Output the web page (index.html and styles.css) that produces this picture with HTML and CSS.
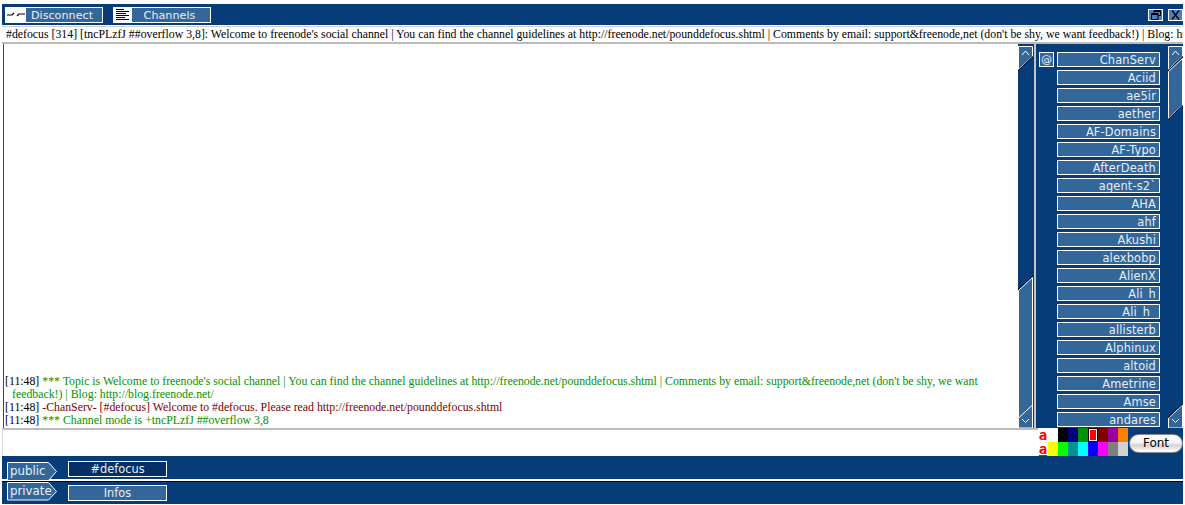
FILE: index.html
```html
<!DOCTYPE html>
<html lang="en">
<head>
<meta charset="utf-8">
<title>freenode chat</title>
<link rel="stylesheet" href="styles.css">
</head>
<body>
<div class="app">
  <header class="topbar">
    <div class="tool">
      <span class="tool-icon">
        <svg width="20" height="15" viewBox="0 0 20 15"><path d="M1 8h5l2-2M11 9l2-2h6" fill="none" stroke="#000" stroke-width="1.2"/></svg>
      </span>
      <span class="tool-btn tool-disconnect">Disconnect</span>
    </div>
    <div class="tool tool-channels">
      <span class="tool-icon tool-icon-narrow">
        <svg width="18" height="15" viewBox="0 0 18 15"><path d="M2 2.500h8M2 4.500h13M2 6.500h10M2 8.500h13M2 10.500h9M2 12.500h13" fill="none" stroke="#000" stroke-width="1"/></svg>
      </span>
      <span class="tool-btn tool-chan">Channels</span>
    </div>
    <div class="win-btns">
      <span class="win-btn">
        <svg width="13" height="10" viewBox="0 0 13 10"><path d="M5 3V.5h6.500v5H9M2.500 3.500h6.500v6h-6.500zM2.500 4.500h6.500M5 1.500h6.500" fill="none" stroke="#000" stroke-width="1"/></svg>
      </span>
      <span class="win-btn">
        <svg width="13" height="10" viewBox="0 0 13 10"><path d="M3 .5l7 9M10 .5l-7 9" fill="none" stroke="#000" stroke-width="1.300"/></svg>
      </span>
    </div>
  </header>

  <div class="topic">#defocus [314] [tncPLzfJ ##overflow 3,8]: Welcome to freenode's social channel | You can find the channel guidelines at http://freenode.net/pounddefocus.shtml | Comments by email: support&amp;freenode,net (don't be shy, we want feedback!) | Blog: http://blog.freenode.net/</div>

  <main class="main">
    <section class="log">
      <p class="line"><span class="ts">[11:48]</span> <span class="green">*** Topic is Welcome to freenode's social channel | You can find the channel guidelines at http://freenode.net/pounddefocus.shtml | Comments by email: support&amp;freenode,net (don't be shy, we want feedback!) | Blog: http://blog.freenode.net/</span></p>
      <p class="line"><span class="ts">[11:48]</span> <span class="red">-ChanServ- [#defocus] Welcome to #defocus. Please read http://freenode.net/pounddefocus.shtml</span></p>
      <p class="line"><span class="ts">[11:48]</span> <span class="green">*** Channel mode is +tncPLzfJ ##overflow 3,8</span></p>
    </section>

    <div class="scroll">
      <svg width="16" height="384" viewBox="0 0 16 384">
        <path d="M.5 2.500h14v10l-14 13z" fill="#336699" stroke="#fff"/>
        <path d="M0 26.500l15-14" stroke="#000"/>
        <path d="M4 11l3.500-4 3.500 4" fill="none" stroke="#fff"/>
        <path d="M.5 246.500l14-13v137l-14 13z" fill="#336699" stroke="#fff"/>
        <path d="M0 245.500l15-14M0 385l15-14" stroke="#000"/>
        <path d="M.5 384v-10l14-13v23z" fill="#336699" stroke="#fff"/>
        <path d="M4 375l3.500 3.500 3.500-3.500" fill="none" stroke="#fff"/>
      </svg>
    </div>

    <aside class="people">
      <div class="at-col"><span class="at">@</span></div>
      <ul class="nicks">
        <li class="nick">ChanServ</li>
        <li class="nick">Aciid</li>
        <li class="nick">ae5ir</li>
        <li class="nick">aether</li>
        <li class="nick">AF-Domains</li>
        <li class="nick">AF-Typo</li>
        <li class="nick">AfterDeath</li>
        <li class="nick">agent-s2`</li>
        <li class="nick">AHA</li>
        <li class="nick">ahf</li>
        <li class="nick">Akushi</li>
        <li class="nick">alexbobp</li>
        <li class="nick">AlienX</li>
        <li class="nick">Ali_h</li>
        <li class="nick">Ali_h_</li>
        <li class="nick">allisterb</li>
        <li class="nick">Alphinux</li>
        <li class="nick">altoid</li>
        <li class="nick">Ametrine</li>
        <li class="nick">Amse</li>
        <li class="nick">andares</li>
      </ul>
      <div class="scroll scroll-nicks">
        <svg width="16" height="384" viewBox="0 0 16 384">
          <path d="M.5 2.500h14v10l-14 13z" fill="#336699" stroke="#fff"/>
          <path d="M0 26.500l15-14" stroke="#000"/>
          <path d="M4 11l3.500-4 3.500 4" fill="none" stroke="#fff"/>
          <path d="M.5 27.500l14-13v47l-14 13z" fill="#336699" stroke="#fff"/>
          <path d="M0 75.500l15-14" stroke="#000"/>
          <path d="M.5 384v-10l14-13v23z" fill="#336699" stroke="#fff"/>
          <path d="M0 373.500l15-14" stroke="#000"/>
          <path d="M4 375l3.500 3.500 3.500-3.500" fill="none" stroke="#fff"/>
        </svg>
      </div>
    </aside>
  </main>

  <div class="inputrow">
    <div class="input"></div>
    <div class="styles">
      <span class="style-a style-bold">a</span>
      <span class="style-a style-under">a</span>
    </div>
    <div class="palette">
      <span class="c c-white"></span><span class="c c-black"></span><span class="c c-navy"></span><span class="c c-green"></span><span class="c c-red"></span><span class="c c-maroon"></span><span class="c c-purple"></span><span class="c c-orange"></span>
      <span class="c c-yellow"></span><span class="c c-lime"></span><span class="c c-teal"></span><span class="c c-cyan"></span><span class="c c-blue"></span><span class="c c-magenta"></span><span class="c c-gray"></span><span class="c c-light"></span>
    </div>
    <div class="font-wrap"><span class="font-btn">Font</span></div>
  </div>

  <footer class="tabs">
    <div class="tab-row">
      <span class="group">
        <svg class="group-shape" width="51" height="19" viewBox="0 0 51 19"><path d="M.5.500h41l8 9-8 9h-41z" fill="#336699" stroke="#fff"/></svg>
        <span class="group-label">public</span>
      </span>
      <span class="tab tab-active">#defocus</span>
    </div>
    <div class="tab-row tab-row-second">
      <span class="group">
        <svg class="group-shape" width="51" height="19" viewBox="0 0 51 19"><path d="M.5.500h41l8 9-8 8.500h-41z" fill="#336699" stroke="#fff"/></svg>
        <span class="group-label">private</span>
      </span>
      <span class="tab">Infos</span>
    </div>
  </footer>
</div>
</body>
</html>
```

FILE: styles.css
```css
* { box-sizing: border-box; }
html, body { margin: 0; padding: 0; background: #fff; overflow: hidden; }
.app {
  width: 1181px;
  height: 500px;
  margin: 4px 0 0 2px;
  display: flex;
  flex-direction: column;
  font-family: "DejaVu Sans", sans-serif;
  color: #e8eef5;
}
.topbar {
  height: 21px;
  background: #063c78;
  display: flex;
  align-items: center;
  padding: 0 0 0 3px;
}
.tool { display: flex; height: 16px; border: 1px solid #fff; }
.tool-channels { margin-left: 10px; }
.tool-icon { width: 20px; background: #fff; display: block; }
.tool-icon-narrow { width: 18px; }
.tool-icon svg { display: block; margin-top: -1px; }
.tool-btn {
  background: #336699;
  font-size: 11.2px;
  line-height: 15px;
  text-align: center;
}
.tool-disconnect { width: 76px; padding-right: 4px; }
.tool-chan { width: 78px; padding-right: 3px; }
.win-btns { margin-left: auto; display: flex; gap: 5px; }
.win-btn { width: 15px; height: 12px; background: #4a80bd; border: 1px solid #fff; display: block; }
.win-btn svg { display: block; }
.topic {
  height: 18px;
  margin: 1px 0 0;
  padding: 0 0 0 4px;
  background: #fff;
  border-top: 1px solid #ccc;
  border-bottom: 2px solid #bbb;
  font: 11.8px/15px "Liberation Serif", serif;
  color: #000;
  white-space: nowrap;
  overflow: hidden;
}
.main { height: 384px; display: flex; }
.log {
  width: 1015px;
  padding: 0 13px 1px 1px;
  margin-left: 1px;
  border-left: 1px solid #444;
  background: #fff;
  display: flex;
  flex-direction: column;
  justify-content: flex-end;
  font: 11.8px/13px "Liberation Serif", serif;
  color: #000;
}
.line { margin: 0; padding-left: 7px; text-indent: -7px; }
.green { color: #009300; }
.red { color: #7f0000; }
.scroll { width: 16px; background: #063c78; flex: none; }
.scroll svg { display: block; }
.people {
  flex: 1;
  display: flex;
  background: #063c78;
  border-left: 2px solid #c4c4c4;
  overflow: hidden;
}
.at-col { width: 21px; padding: 8px 0 0 3px; flex: none; }
.at {
  display: block;
  width: 15px;
  height: 15px;
  background: #336699;
  border: 1px solid #fff;
  font-size: 11px;
  line-height: 13px;
  text-align: center;
}
.nicks {
  list-style: none;
  margin: 0;
  padding: 8px 0 0;
  width: 103px;
  flex: none;
  display: flex;
  flex-direction: column;
  gap: 3px;
  height: 384px;
  overflow: hidden;
}
.nick {
  height: 15px;
  flex: none;
  background: #336699;
  border: 1px solid #fff;
  font-size: 11.4px;
  line-height: 14px;
  letter-spacing: .15px;
  text-align: right;
  padding-right: 3px;
}
.scroll-nicks { margin-left: 8px; }
.inputrow { height: 28px; display: flex; background: #063c78; }
.input { width: 1036px; background: #fff; border-top: 2px solid #bbb; border-left: 1px solid #ddd; }
.styles {
  width: 10px;
  background: #fff;
  display: flex;
  flex-direction: column;
  font: bold 14px/14px "DejaVu Sans Mono", monospace;
  color: #f00;
  text-align: center;
}
.style-a { display: block; height: 14px; }
.style-under { text-decoration: underline; }
.palette {
  width: 80px;
  display: grid;
  grid-template-columns: repeat(8, 10px);
  grid-template-rows: 14px 14px;
}
.c { display: block; }
.c-white { background: #fff; }
.c-black { background: #000; }
.c-navy { background: #00007f; }
.c-green { background: #009300; }
.c-red { background: #f00; border: 2px solid #fff; outline: 1px solid #000; outline-offset: -1px; }
.c-maroon { background: #7f0000; }
.c-purple { background: #9c009c; }
.c-orange { background: #fc7f00; }
.c-yellow { background: #ff0; }
.c-lime { background: #0f0; }
.c-teal { background: #009393; }
.c-cyan { background: #0ff; }
.c-blue { background: #00f; }
.c-magenta { background: #f0f; }
.c-gray { background: #7f7f7f; }
.c-light { background: #d2d2d2; }
.font-wrap { flex: 1; padding: 6px 0 0 1px; }
.font-btn {
  display: block;
  width: 54px;
  height: 19px;
  border-radius: 10px;
  background: linear-gradient(#fff 0%, #f4f4f4 45%, #d4d4d4 60%, #fff 100%);
  border: 1px solid #8a8a8a;
  color: #000;
  font-size: 12px;
  line-height: 17px;
  text-align: center;
}
.tabs { flex: 1; background: #063c78; display: flex; flex-direction: column; }
.tab-row { height: 25px; display: flex; padding: 6px 0 0 5px; border-bottom: 2px solid #fff; box-shadow: 0 1px 0 #000; }
.tab-row-second { height: 23px; border-bottom: 0; box-shadow: none; padding-top: 1px; }
.group { width: 51px; height: 19px; position: relative; display: block; flex: none; }
.group-shape { position: absolute; left: 0; top: 0; display: block; }
.group-label {
  position: relative;
  display: block;
  font-size: 11.8px;
  line-height: 18px;
  padding-left: 3px;
}
.tab {
  width: 99px;
  height: 16px;
  margin: 0 0 0 10px;
  background: #336699;
  border: 1px solid #fff;
  font-size: 11.4px;
  line-height: 15px;
  text-align: center;
}
.tab-active { background: #052f66; margin-top: -1px; }
.tab-row-second .tab { margin-top: 3px; }
```
